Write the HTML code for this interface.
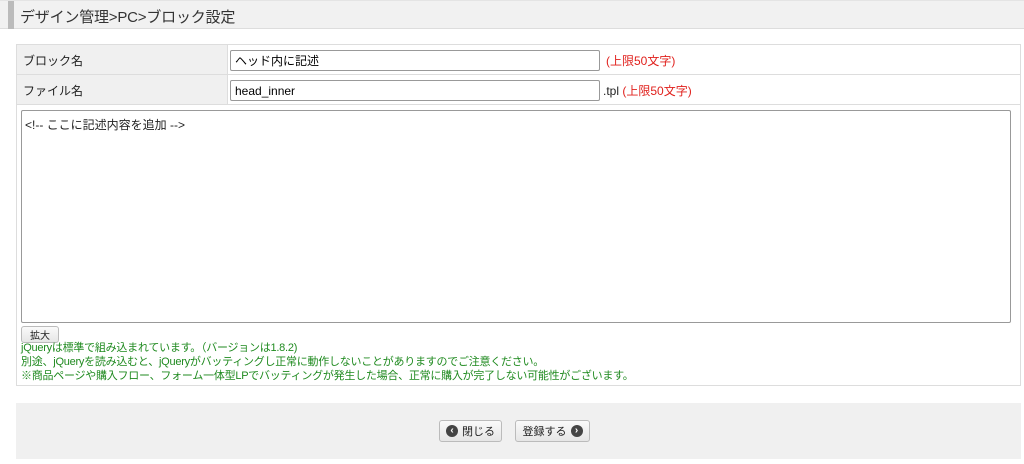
<!DOCTYPE html>
<html><head><meta charset="utf-8"><style>
*{box-sizing:border-box;margin:0;padding:0}
body{width:1024px;height:464px;background:#fff;font-family:"Liberation Sans","Noto Sans CJK JP",sans-serif;font-size:12px;color:#222;position:relative;overflow:hidden}
.hdr{position:absolute;left:0;top:0;width:1024px;height:29px;background:#f1f1f1;border-bottom:1px solid #ddd;border-top:1px solid #e4e4e4}
.hdr .bar{position:absolute;left:8px;top:0;width:6px;height:28px;background:#bbb}
.hdr h1{position:absolute;left:20px;top:5px;font-size:15px;font-weight:normal;color:#333;letter-spacing:-0.2px}
.abs{position:absolute}
.tbl{left:16px;top:44px;width:1005px;height:342px;border:1px solid #ddd}
.lab{background:#f0f0f0;border-right:1px solid #ddd;border-bottom:1px solid #ddd}
.row{border-bottom:1px solid #ddd}
input.t{position:absolute;height:21px;border:1px solid #999;border-radius:2px;font-size:12px;padding:0 4px;font-family:inherit;background:#fff}
.red{color:#e0201c}
.green{color:#1f8a1f;font-size:11px;line-height:14px;letter-spacing:-0.25px}
.btn{position:absolute;height:22px;border:1px solid #bbb;border-radius:3px;background:linear-gradient(#fafafa,#e6e6e6);font-size:11px;display:flex;align-items:center;justify-content:center;gap:4px}
.ic{width:12px;height:12px;border-radius:50%;background:#444;color:#fff;font-size:10px;line-height:11px;text-align:center;font-weight:bold}
</style></head><body>
<div class="hdr"><div class="bar"></div><h1>デザイン管理&gt;PC&gt;ブロック設定</h1></div>
<div class="abs tbl"></div>
<div class="abs lab" style="left:17px;top:45px;width:211px;height:30px"></div>
<div class="abs row" style="left:228px;top:45px;width:792px;height:30px"></div>
<div class="abs lab" style="left:17px;top:75px;width:211px;height:30px"></div>
<div class="abs row" style="left:228px;top:75px;width:792px;height:30px"></div>
<div class="abs" style="left:23px;top:52px">ブロック名</div>
<div class="abs" style="left:23px;top:82px">ファイル名</div>
<input class="t" style="left:230px;top:50px;width:370px" value="ヘッド内に記述">
<span class="abs red" style="left:606px;top:52px">(上限50文字)</span>
<span class="abs" style="left:603px;top:82px">.tpl <span class="red">(上限50文字)</span></span>
<input class="t" style="left:230px;top:80px;width:370px" value="head_inner">
<div class="abs" style="left:21px;top:110px;width:990px;height:213px;border:1px solid #999;border-radius:2px;padding:5px 3px;font-size:12px">&lt;!-- ここに記述内容を追加 --&gt;</div>
<div class="btn" style="left:21px;top:326px;width:38px;height:17px;font-size:10px">拡大</div>
<div class="abs green" style="left:21px;top:341px">jQueryは標準で組み込まれています。（バージョンは1.8.2)<br>別途、jQueryを読み込むと、jQueryがバッティングし正常に動作しないことがありますのでご注意ください。<br>※商品ページや購入フロー、フォーム一体型LPでバッティングが発生した場合、正常に購入が完了しない可能性がございます。</div>
<div class="abs" style="left:16px;top:403px;width:1005px;height:56px;background:#f0f0f0"></div>
<div class="btn" style="left:439px;top:420px;width:63px"><span class="ic">‹</span>閉じる</div>
<div class="btn" style="left:515px;top:420px;width:75px">登録する<span class="ic">›</span></div>
</body></html>
